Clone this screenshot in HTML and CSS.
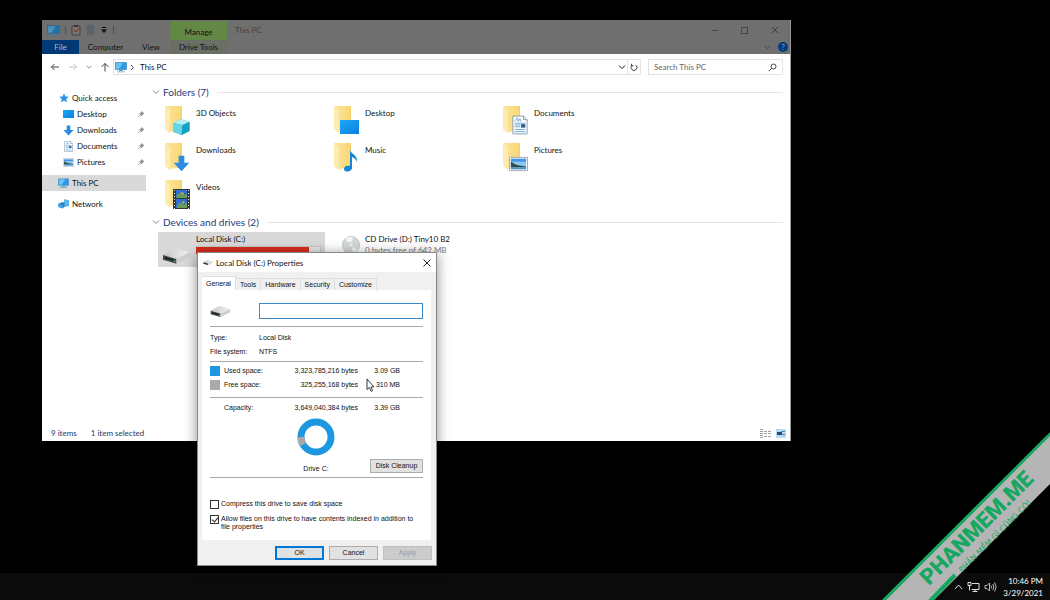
FILE: index.html
```html
<!DOCTYPE html>
<html lang="en">
<head>
<meta charset="utf-8">
<title>This PC</title>
<link rel="stylesheet" href="styles.css">
</head>
<body>
<svg class="defs" aria-hidden="true">
  <defs>
    <linearGradient id="gf" x1="0" x2="1"><stop offset="0" stop-color="#fbe59f"/><stop offset="1" stop-color="#f8d775"/></linearGradient>
    <linearGradient id="gb" x1="0" y1="0" x2="1" y2="1"><stop offset="0" stop-color="#1aa7f5"/><stop offset="1" stop-color="#0c80e0"/></linearGradient>
    <linearGradient id="gd" x1="0" x2="1"><stop offset="0" stop-color="#c4c6c6"/><stop offset="1" stop-color="#f3f4f4"/></linearGradient>
    <symbol id="folder" viewBox="0 0 26 30"><path d="M1 0h16v25H6z" fill="#f4cf6a"/><path d="M1 0h15v24l-10 2-5-3z" fill="url(#gf)"/><path d="M0 0l5 4v24l-5-5z" fill="#fdebb0"/></symbol>
    <symbol id="pc" viewBox="0 0 12 12"><path d="M.5 1.500h11v7H.5z" fill="#2b9be8" stroke="#3d86b4" stroke-width=".7"/><path d="M1 2h7l-4 6H1z" fill="#69c3f5"/><path d="M4 9h4v1H4zM2 10.400h8v.8H2z" fill="#5aa1c9"/></symbol>
    <symbol id="down" viewBox="0 0 12 12"><path d="M4 .5h4v5h3.500L6 11.500.5 5.500H4z" fill="#2c8ce3"/></symbol>
    <symbol id="doc" viewBox="0 0 18 22"><path d="M1 1h12l4 4v16H1z" fill="#fff" stroke="#8295a5"/><path d="M13 1v4h4" fill="#dce8f1" stroke="#8295a5"/><path d="M3 7l3-4 1 4 2-3 1 3M3 9h12M3 11h6M3 13h6M3 16h12M3 18.500h12" stroke="#5ba4de" fill="none"/><path d="M10 10h5v4h-5z" fill="#315f8f"/></symbol>
    <symbol id="pic" viewBox="0 0 20 15"><path d="M.5.5h19v14H.5z" fill="#f7fafc" stroke="#9eabb6"/><path d="M2 2h16v11H2z" fill="#8bc7f5"/><path d="M2 2h16v3H2z" fill="#4593e2"/><path d="M2 5l5 3 4 1 7 1v1H2z" fill="#2c4e47"/><path d="M2 11h16v2H2z" fill="#5191bf"/></symbol>
    <symbol id="pin" viewBox="0 0 10 10"><path d="M5.500 1l3.500 3.500-1 .5-1.500 1.500-.3 1.500L2.500 4.500l1.500-.3L5.500 2.500z" fill="#8b8f93"/><path d="M4 6L1 9" stroke="#8b8f93"/></symbol>
    <symbol id="drive" viewBox="0 0 30 18"><path d="M1 8L13 1l16 4-14 7z" fill="url(#gd)"/><path d="M1 8l14 4v5L1 13z" fill="#43494a"/><path d="M15 12l14-7v5l-14 7z" fill="#cdd0d1"/><path d="M3 10l9 2.600v1.500L3 11.500z" fill="#141b1b"/><circle cx="13" cy="14.500" r=".8" fill="#46c463"/></symbol>
    <symbol id="chev" viewBox="0 0 8 8"><path d="M1 2.500L4 5.500 7 2.500" fill="none" stroke="currentColor"/></symbol>
  </defs>
</svg>

<main class="desktop">
  <section class="window explorer" aria-label="This PC">
    <header class="ribbon">
      <div class="quick">
        <svg width="13" height="13"><use href="#pc"/></svg>
        <i class="sep"></i>
        <svg width="10" height="12" viewBox="0 0 10 12"><path d="M1 2h8v9H1z" fill="#a09b96" stroke="#5c5650"/><path d="M3 1h4v2H3z" fill="#51453a"/><path d="M3 6l2 2 3-4" fill="none" stroke="#a34221"/></svg>
        <svg width="9" height="12" viewBox="0 0 9 12"><path d="M1 1h7v10H1z" fill="#7b8186" stroke="#828b92"/></svg>
        <svg width="8" height="8" viewBox="0 0 8 8"><path d="M2 1.500h4" stroke="#111"/><path d="M1 3.500h6L4 7z" fill="#111"/></svg>
        <i class="sep"></i>
      </div>
      <div class="manage">Manage</div>
      <div class="wintitle">This PC</div>
      <div class="winbuttons">
        <button aria-label="Minimize"><svg width="8" height="8" viewBox="0 0 8 8"><path d="M1 4.500h6" stroke="#4a4a4a"/></svg></button>
        <button aria-label="Maximize"><svg width="8" height="8" viewBox="0 0 8 8"><path d="M.5 1.500h6v6h-6z" fill="none" stroke="#444"/></svg></button>
        <button aria-label="Close"><svg width="8" height="8" viewBox="0 0 8 8"><path d="M1 1l6 6M7 1L1 7" stroke="#333" stroke-width=".8"/></svg></button>
      </div>
      <nav class="ribtabs">
        <button class="file">File</button><button class="computer">Computer</button><button class="view">View</button><button class="dtools">Drive Tools</button>
        <span class="help"><svg width="7" height="7"><use href="#chev"/></svg><button class="q" aria-label="Help">?</button></span>
      </nav>
    </header>

    <div class="addressbar">
      <div class="arrows">
        <button aria-label="Back"><svg width="10" height="10" viewBox="0 0 10 10"><path d="M9 5H1.500M4.500 2l-3 3 3 3" fill="none" stroke="#444"/></svg></button>
        <button aria-label="Forward"><svg width="10" height="10" viewBox="0 0 10 10"><path d="M1 5h7.500M5.500 2l3 3-3 3" fill="none" stroke="#c4c4c4"/></svg></button>
        <button aria-label="Recent"><svg width="6" height="6"><use href="#chev"/></svg></button>
        <button aria-label="Up"><svg width="10" height="10" viewBox="0 0 10 10"><path d="M5 9.500V1.500M1.500 5L5 1.500 8.500 5" fill="none" stroke="#444"/></svg></button>
      </div>
      <div class="path">
        <svg width="12" height="12"><use href="#pc"/></svg>
        <svg width="5" height="7" viewBox="0 0 5 7"><path d="M1 1l2.500 2.500L1 6" fill="none" stroke="#555"/></svg>
        <span>This PC</span>
        <button class="drop" aria-label="Locations"><svg width="8" height="8"><use href="#chev"/></svg></button>
        <button class="refresh" aria-label="Refresh"><svg width="8" height="8" viewBox="0 0 8 8"><path d="M2 2.200A3 3 0 1 0 6 2.200M1.500.8v2h2" fill="none" stroke="#444"/></svg></button>
      </div>
      <div class="search">
        <input type="text" placeholder="Search This PC" aria-label="Search This PC">
        <svg width="9" height="9" viewBox="0 0 9 9"><circle cx="5.500" cy="3.500" r="2.500" fill="none" stroke="#444"/><path d="M3.600 5.400L.8 8.200" stroke="#444"/></svg>
      </div>
    </div>

    <div class="content">
      <nav class="side">
        <a class="top" href="#"><svg width="10" height="10" viewBox="0 0 10 10"><path d="M5 .3l1.400 3.100 3.400.3-2.600 2.200.9 3.500L5 7.600 1.900 9.400l.9-3.500L.2 3.700l3.400-.3z" fill="#2a93df"/></svg>Quick access</a>
        <a class="sub" href="#"><svg width="11" height="10" viewBox="0 0 11 10"><path d="M0 1h11v8H0z" fill="url(#gb)"/></svg><span>Desktop</span><svg class="pin" width="8" height="8"><use href="#pin"/></svg></a>
        <a class="sub" href="#"><svg width="11" height="11"><use href="#down"/></svg><span>Downloads</span><svg class="pin" width="8" height="8"><use href="#pin"/></svg></a>
        <a class="sub" href="#"><svg width="11" height="11"><use href="#doc"/></svg><span>Documents</span><svg class="pin" width="8" height="8"><use href="#pin"/></svg></a>
        <a class="sub" href="#"><svg width="11" height="9"><use href="#pic"/></svg><span>Pictures</span><svg class="pin" width="8" height="8"><use href="#pin"/></svg></a>
        <a class="top group on" href="#"><svg width="11" height="12"><use href="#pc"/></svg>This PC</a>
        <a class="top group" href="#"><svg width="11" height="12" viewBox="0 0 12 12"><path d="M0 6l4-2h3V1l5 1v6l-5 1-2 2-5-2z" fill="#2681c5"/><path d="M7 1l5 1v6l-5 0z" fill="#58b8ee"/><path d="M0 6l5 1v4L0 9z" fill="#4ba5de"/></svg>Network</a>
      </nav>

      <div class="main">
        <h2><svg width="8" height="8"><use href="#chev"/></svg>Folders (7)</h2>
        <div class="tiles">
          <a class="tile" href="#"><span class="ico"><svg width="26" height="30"><use href="#folder"/></svg><svg class="over" width="17" height="16" viewBox="0 0 16 16"><path d="M0 4l7-4 9 3v9l-8 4-8-3z" fill="#35bbd3"/><path d="M0 4l7-4 9 3-7 3z" fill="#b6edf3"/><path d="M0 4l9 2-1 10-8-3z" fill="#63d5e3"/><path d="M9 6l7-3v9l-8 4z" fill="#159fc0"/></svg></span>3D Objects</a>
          <a class="tile" href="#"><span class="ico"><svg width="26" height="30"><use href="#folder"/></svg><svg class="over" width="19" height="15" viewBox="0 0 19 15"><path d="M0 0h19v14H0z" fill="url(#gb)"/></svg></span>Desktop</a>
          <a class="tile" href="#"><span class="ico"><svg width="26" height="30"><use href="#folder"/></svg><svg class="over" width="16" height="20"><use href="#doc"/></svg></span>Documents</a>
          <a class="tile" href="#"><span class="ico"><svg width="26" height="30"><use href="#folder"/></svg><svg class="over" width="17" height="17"><use href="#down"/></svg></span>Downloads</a>
          <a class="tile" href="#"><span class="ico"><svg width="26" height="30"><use href="#folder"/></svg><svg class="over" width="16" height="22" viewBox="0 0 16 22"><path d="M7 0c1 4 8 5 7 12-1-3-3-4-5-5v11c0 4-8 5-8 1 0-3 3-4 6-3z" fill="#1787d5"/></svg></span>Music</a>
          <a class="tile" href="#"><span class="ico"><svg width="26" height="30"><use href="#folder"/></svg><svg class="over" width="19" height="16"><use href="#pic"/></svg></span>Pictures</a>
          <a class="tile" href="#"><span class="ico"><svg width="26" height="30"><use href="#folder"/></svg><svg class="over" width="17" height="20" viewBox="0 0 17 20"><path d="M0 0h17v20H0z" fill="#34383b"/><path d="M3 1h11v8H3zM3 10h11v9H3z" fill="#2e6ed0"/><path d="M4 6l4-3 3 3 3-1v4H3zM4 17l3-4 4 3 3-3v6H4z" fill="#6a9a58"/><path d="M8 3l3 1-1 2zM9 12l3 1-2 2z" fill="#e8b142"/><path d="M1.500 1v19M15.500 1v19" stroke="#e1e4e6" stroke-dasharray="1 2"/></svg></span>Videos</a>
        </div>
        <h2><svg width="8" height="8"><use href="#chev"/></svg>Devices and drives (2)</h2>
        <div class="tiles drives">
          <a class="tile selected" href="#"><span class="ico"><svg width="29" height="18"><use href="#drive"/></svg></span><span class="info">Local Disk (C:)<span class="bar"><span class="fill" style="width:91%"></span></span></span></a>
          <a class="tile" href="#"><span class="ico cd"><svg width="18" height="18" viewBox="0 0 18 18"><circle cx="9" cy="9" r="8.500" fill="#d4d8d9" stroke="#bfc3c4"/><path d="M9 9L3 3a8.500 8.500 0 0 1 8-2zM9 9l7 5a8.500 8.500 0 0 1-5 3z" fill="#f3f5f5"/><circle cx="9" cy="9" r="2.500" fill="#eceeee" stroke="#b8bcbd" stroke-width=".6"/></svg></span><span class="info">CD Drive (D:) Tiny10 B2<small>0 bytes free of 642 MB</small></span></a>
        </div>
      </div>
    </div>

    <footer class="status"><span>9 items</span><span>1 item selected</span>
      <span class="modes"><button aria-label="Details"><svg width="11" height="9" viewBox="0 0 11 9"><path d="M0 .5h3M0 2.500h3M0 4.500h3M0 6.500h3M0 8.500h3M4 2.500h3M4 4.500h3M4 7.500h3M8 2.500h3M8 4.500h3M8 7.500h3" stroke="#a0a0a0"/></svg></button><button aria-label="Large icons"><svg width="10" height="9" viewBox="0 0 10 9"><path d="M0 0h10v9H0z" fill="#b9dcf5"/><path d="M1 3h5v3H1z" fill="#244f78"/><path d="M5 2.500h4M6 5.500h3" stroke="#5686ac"/></svg></button></span>
    </footer>
  </section>

  <section class="window dialog" role="dialog" aria-label="Local Disk (C:) Properties">
    <header class="dtitle"><svg width="10" height="7"><use href="#drive"/></svg><span>Local Disk (C:) Properties</span><button aria-label="Close"><svg width="8" height="8" viewBox="0 0 8 8"><path d="M.5.5l7 7M7.500.5l-7 7" stroke="#222"/></svg></button></header>
    <nav class="tabs"><button class="active">General</button><button>Tools</button><button>Hardware</button><button>Security</button><button>Customize</button></nav>
    <div class="panel">
      <div class="name"><svg width="21" height="13"><use href="#drive"/></svg><input type="text" aria-label="Volume label"></div>
      <dl class="facts"><dt>Type:</dt><dd>Local Disk</dd><dt>File system:</dt><dd>NTFS</dd></dl>
      <div class="block">
        <table class="space">
          <tr><th scope="row"><i class="sw used"></i>Used space:</th><td>3,323,785,216 bytes</td><td>3.09 GB</td></tr>
          <tr><th scope="row"><i class="sw free"></i>Free space:</th><td>325,255,168 bytes</td><td>310 MB</td></tr>
        </table>
      </div>
      <table class="space cap"><tr><th scope="row"><i class="sw"></i>Capacity:</th><td>3,649,040,384 bytes</td><td>3.39 GB</td></tr></table>
      <div class="usage">
        <figure><svg width="38" height="38" viewBox="0 0 38 38"><circle cx="19" cy="19" r="15" fill="none" stroke="#1b98e0" stroke-width="7"/><path d="M4 19a15 15 0 0 0 2 7.500" fill="none" stroke="#a9a9a9" stroke-width="7"/></svg><figcaption>Drive C:</figcaption></figure>
        <button class="btn">Disk Cleanup</button>
      </div>
      <div class="checks">
        <label><input type="checkbox"><span>Compress this drive to save disk space</span></label>
        <label><input type="checkbox" checked><span>Allow files on this drive to have contents indexed in addition to file properties</span></label>
      </div>
    </div>
    <footer class="actions"><button class="btn ok">OK</button><button class="btn">Cancel</button><button class="btn" disabled>Apply</button></footer>
  </section>

  <svg class="cursor" width="9" height="14" viewBox="0 0 9 14"><path d="M1 1v10.500l2.300-2 1.700 3.800 1.600-.7-1.700-3.700H8z" fill="#fff" stroke="#222" stroke-width=".9"/></svg>

  <footer class="taskbar">
    <svg width="9" height="8" viewBox="0 0 9 8"><path d="M1 6l3.500-4L8 6" fill="none" stroke="#ddd"/></svg>
    <svg width="13" height="12" viewBox="0 0 13 12"><path d="M5 2.500h7v6H4.500M8 8.500v2M5.500 10.500h5M1 1.500h3v3H1zM2.500 4.500v5" fill="none" stroke="#ddd"/></svg>
    <svg width="13" height="12" viewBox="0 0 13 12"><path d="M1 4.500h2l2.500-2.500v8L3 7.500H1zM7 4.500q1 1.500 0 3M8.800 3q2 3 0 6M10.600 1.500q3 4.500 0 9" fill="none" stroke="#ccc" stroke-width=".9"/></svg>
    <div class="clock"><time>10:46 PM</time><time>3/29/2021</time></div>
  </footer>

  <svg class="banner" width="170" height="170" viewBox="0 0 170 170">
    <path d="M3 170L170 3v51L54 170z" fill="#b5b5b5"/>
    <path d="M2 172L172 2" stroke="#16a763" stroke-width="3"/>
    <path d="M50 171l25-26" stroke="#16a763" stroke-width="4"/>
    <g transform="translate(49 156) rotate(-45)"><text class="brand" x="0" y="0">PHANMEM.ME</text></g>
    <g transform="translate(82 143) rotate(-45)"><text class="slogan" x="0" y="0">PHẦN MỀM GÌ CŨNG CÓ!</text></g>
  </svg>
</main>
</body>
</html>
```
FILE: styles.css
```css
* { box-sizing: border-box; }
body { margin: 0; background: #000; font: 8px/12px Lato, "Noto Sans", sans-serif; color: #111; }
button, input { font: inherit; color: inherit; margin: 0; padding: 0; border: 0; background: none; }
a { color: inherit; text-decoration: none; }
svg { flex: none; display: block; }
.defs { position: absolute; width: 0; height: 0; }
.desktop { position: relative; min-height: 100vh; overflow: hidden; display: flex; flex-direction: column; justify-content: flex-end; }
.window { position: absolute; display: flex; flex-direction: column; }

.explorer { left: 42px; top: 20px; width: 749px; height: 421px; background: #fff; border-right: 1px solid #999; }
.ribbon { display: grid; grid-template-columns: 128px 57px 1fr auto; grid-template-rows: 20px 14px; background: #6f6f6f; color: #111; }
.quick { display: flex; align-items: center; gap: 5px; padding-left: 5px; filter: brightness(.75); }
.sep { width: 1px; height: 8px; background: #686868; }
.manage { background: #638846; text-align: center; line-height: 22px; margin-top: 1px; }
.wintitle { padding-left: 8px; line-height: 20px; color: #444; }
.winbuttons { display: flex; align-items: center; gap: 22px; padding-right: 11px; }
.ribtabs { grid-column: 1 / -1; display: flex; align-items: center; line-height: 14px; }
.ribtabs .file { width: 37px; background: #003a76; color: #a9bacb; }
.ribtabs .computer { width: 53px; }
.ribtabs .view { width: 38px; }
.ribtabs .dtools { width: 57px; white-space: nowrap; background: #696f65; }
.help { margin-left: auto; display: flex; align-items: center; gap: 7px; padding-right: 2px; }
.help > svg { color: #444; }
.q { width: 10px; height: 10px; border-radius: 50%; background: #003d7c; color: #8ab; line-height: 10px; }

.addressbar { display: flex; align-items: center; gap: 7px; padding: 5px 7px 5px 8px; }
.arrows { display: flex; align-items: center; gap: 8px; color: #666; margin-right: -4px; }
.path { flex: 1; display: flex; align-items: center; height: 16px; border: 1px solid #e2e2e2; padding-left: 1px; gap: 3px; }
.drop { margin-left: auto; margin-right: -2px; }
.path span { padding-left: 2px; }
.refresh { border-left: 1px solid #e2e2e2; height: 14px; padding: 0 2px; }
.search { width: 135px; height: 16px; border: 1px solid #e2e2e2; display: flex; align-items: center; padding: 0 5px; }
.search input { flex: 1; min-width: 0; outline: 0; }
.search input::placeholder { color: #666; opacity: 1; }

.content { flex: 1; display: flex; }
.side { width: 104px; padding-top: 10px; display: flex; flex-direction: column; }
.side a { display: flex; align-items: center; height: 16px; }
.top { padding-left: 16px; gap: 3px; }
.top:first-child { padding-left: 17px; }
.side .sub { padding-left: 21px; gap: 3px; }
.side .group { margin-top: 5px; }
.on { background: #d9d9d9; }
.pin { margin-left: auto; margin-right: 1px; }
.main { flex: 1; padding: 6px 7px 0 6px; }
h2 { display: flex; align-items: center; gap: 3px; margin: 0 0 8px; font-size: 10px; line-height: 12px; font-weight: 400; color: #26397a; }
h2 svg { color: #7783a5; }
h2::after { content: ""; flex: 1; height: 1px; background: #e4e4e4; margin-left: 5px; }
.tiles { display: grid; grid-template-columns: repeat(3, 167px); gap: 2px; padding-left: 6px; }
.tiles + h2 { margin: 1px 0 4px; }
.tile { display: flex; gap: 5px; height: 35px; padding-left: 7px; line-height: 14px; }
.ico { position: relative; width: 26px; }
.over { position: absolute; right: 1px; bottom: 6px; }
.selected { background: #d9d9d9; padding-left: 4px; }
.selected .ico { width: 29px; padding-top: 15px; }
.cd { padding: 4px 0 0 8px; }
.info { flex: 1; white-space: nowrap; }
.info small { display: block; font-size: 8px; line-height: 8px; color: #777; }
.bar { display: block; height: 9px; width: 125px; background: #e6e6e6; border: 1px solid #c8c8c8; border-left: 0; }
.fill { display: block; height: 100%; background: #da2c1c; }
.status { display: flex; gap: 14px; align-items: center; height: 16px; padding: 0 4px 0 9px; color: #26345f; }
.modes { margin-left: auto; display: flex; gap: 5px; }

.dialog { left: 197px; top: 252px; width: 240px; background: #f0f0f0; border: 1px solid #888; box-shadow: 0 2px 12px rgba(0,0,0,.45); font: 7px/8px "Liberation Sans", Arial, sans-serif; }
.dtitle { display: flex; align-items: center; gap: 3px; height: 19px; background: #fff; padding: 0 5px; font: 8px/12px Lato, "Noto Sans", sans-serif; }
.dtitle button { margin-left: auto; }
.tabs { display: flex; align-items: flex-end; padding: 4px 4px 0; }
.tabs button { height: 12px; padding: 0 4px; border: 1px solid #dedede; border-bottom: 0; border-left: 0; }
.tabs .active { height: 14px; background: #fff; }
.panel { margin: 0 5px 0 4px; padding: 13px 8px 9px; background: #fff; }
.name { display: flex; align-items: center; justify-content: space-between; padding-bottom: 7px; border-bottom: 1px solid #a8a8a8; }
.name input { width: 164px; height: 16px; border: 1px solid #3c8ac7; }
.facts { display: grid; grid-template-columns: 49px 1fr; gap: 6px 0; margin: 0; padding: 7px 0 5px; border-bottom: 1px solid #a8a8a8; }
.facts dd { margin: 0; }
.block { border-bottom: 1px solid #a8a8a8; padding: 2px 0 5px; }
.space { width: 190px; border-collapse: collapse; }
.space td, .space th { padding: 0; height: 14px; font-weight: 400; text-align: right; }
.space th { text-align: left; width: 70px; }
.space td:last-child { width: 42px; }
.sw { display: inline-block; width: 10px; height: 10px; margin-right: 4px; vertical-align: middle; }
.used { background: #1b98e0; }
.free { background: #a9a9a9; }
.cap { margin-top: 3px; }
.usage { display: flex; align-items: flex-end; justify-content: flex-end; gap: 35px; padding: 3px 0 4px; border-bottom: 1px solid #a8a8a8; }
figure { margin: 0; display: flex; flex-direction: column; align-items: center; gap: 9px; }
.btn { width: 49px; height: 14px; background: #e1e1e1; border: 1px solid #adadad; }
.usage .btn { width: 53px; }
.checks { display: flex; flex-direction: column; gap: 6px; padding-top: 22px; }
.checks label { display: flex; gap: 2px; }
.checks input { appearance: none; flex: none; width: 9px; height: 9px; border: 1px solid #333; background: #fff; }
.checks input:checked::after { content: ""; display: block; width: 3px; height: 5px; margin: 0 2px; border: solid #222; border-width: 0 1px 1px 0; transform: rotate(40deg); }
.actions { display: flex; justify-content: flex-end; gap: 5px; padding: 6px 4px 5px; }
.btn.ok { border: 2px solid #0078d7; }
.btn:disabled { background: #ccc; border-color: #bfbfbf; color: #999; }

.cursor { position: absolute; left: 366px; top: 378px; }
.taskbar { display: flex; align-items: center; justify-content: flex-end; gap: 4px; height: 27px; padding-right: 7px; background: #0b0b0b; color: #fff; }
.clock { display: flex; flex-direction: column; align-items: flex-end; margin-left: 2px; }
.banner { position: absolute; right: 0; bottom: 0; }
.brand { font: 900 22px Roboto, sans-serif; fill: #16a763; }
.slogan { font: 8px "DejaVu Sans", sans-serif; fill: #16a763; }
```
